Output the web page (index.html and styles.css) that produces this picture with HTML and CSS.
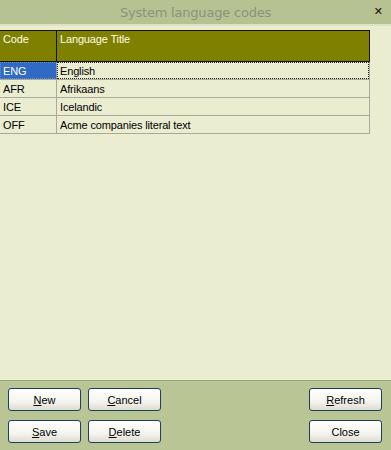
FILE: index.html
```html
<!DOCTYPE html>
<html>
<head>
<meta charset="utf-8">
<link rel="stylesheet" href="styles.css">
</head>
<body>
<div class="window">
  <div class="titlebar">
    <span class="title">System language codes</span>
    <span class="close-x">✕</span>
  </div>
  <div class="content">
    <div class="grid">
      <div class="row head">
        <div class="cell c1">Code</div>
        <div class="cell c2">Language Title</div>
      </div>
      <div class="row">
        <div class="cell c1 selected">ENG</div>
        <div class="cell c2 focus">English</div>
      </div>
      <div class="row">
        <div class="cell c1">AFR</div>
        <div class="cell c2">Afrikaans</div>
      </div>
      <div class="row">
        <div class="cell c1">ICE</div>
        <div class="cell c2">Icelandic</div>
      </div>
      <div class="row">
        <div class="cell c1">OFF</div>
        <div class="cell c2">Acme companies literal text</div>
      </div>
    </div>
  </div>
  <div class="footer">
    <div class="btn-col">
      <button class="btn"><u>N</u>ew</button>
      <button class="btn"><u>S</u>ave</button>
    </div>
    <div class="btn-col">
      <button class="btn"><u>C</u>ancel</button>
      <button class="btn"><u>D</u>elete</button>
    </div>
    <div class="spacer"></div>
    <div class="btn-col">
      <button class="btn"><u>R</u>efresh</button>
      <button class="btn">Close</button>
    </div>
  </div>
</div>
</body>
</html>
```

FILE: styles.css
```css
html, body {
  margin: 0;
  padding: 0;
}
body {
  width: 391px;
  height: 450px;
  overflow: hidden;
  font-family: "Liberation Sans", Arial, sans-serif;
  font-size: 11px;
  background: #b9c594;
}
.window {
  display: flex;
  flex-direction: column;
  height: 450px;
}
.titlebar {
  height: 24px;
  background: #b6c291;
  border-bottom: 2px solid #dfe3c4;
  display: flex;
  align-items: center;
  justify-content: center;
  position: relative;
}
.title {
  color: #8d927c;
  font-size: 13px;
  font-family: "DejaVu Sans", sans-serif;
  letter-spacing: -0.2px;
}
.close-x {
  position: absolute;
  right: 8px;
  top: 5px;
  font-size: 11px;
  font-weight: bold;
  color: #111;
  font-family: "DejaVu Sans", sans-serif;
}
.content {
  height: 355px;
  background: #ebedd1;
  border-bottom: 1px solid #9a9f88;
  padding-top: 4px;
  box-sizing: border-box;
}
.grid {
  width: 370px;
}
.row {
  display: flex;
  height: 18px;
  border-bottom: 1px solid #a9ab9a;
  border-right: 1px solid #a9ab9a;
  box-sizing: border-box;
}
.row.head {
  height: 32px;
  background: #808000;
  border: 1px solid #111;
  border-left: none;
  color: #fffbe8;
}
.cell {
  padding: 2px 3px 0;
  box-sizing: border-box;
  white-space: nowrap;
  line-height: 14px;
  letter-spacing: -0.15px;
}
.c1 {
  width: 57px;
  border-right: 1px solid #a9ab9a;
}
.head .c1 {
  border-right: 1px solid #111;
  padding-top: 1px;
}
.head .c2 {
  padding-top: 1px;
}
.c2 {
  flex: 1;
}
.selected {
  background: #316ac5;
  color: #fff;
  outline: 1px dotted #6a8bc8;
  outline-offset: -1px;
}
.focus {
  outline: 1px dotted #222;
  outline-offset: -1px;
}
.footer {
  flex: 1;
  display: flex;
  padding: 7px 9px 0 8px;
  gap: 7px;
}
.btn-col {
  display: flex;
  flex-direction: column;
  gap: 9px;
}
.spacer {
  flex: 1;
}
.btn {
  width: 73px;
  height: 23px;
  border: 1px solid #1f3e5a;
  border-radius: 3px;
  background: linear-gradient(#ffffff, #f4f4ee 60%, #dcdcd2);
  font-family: "Liberation Sans", Arial, sans-serif;
  font-size: 11px;
  color: #000;
  padding: 0;
}
```
